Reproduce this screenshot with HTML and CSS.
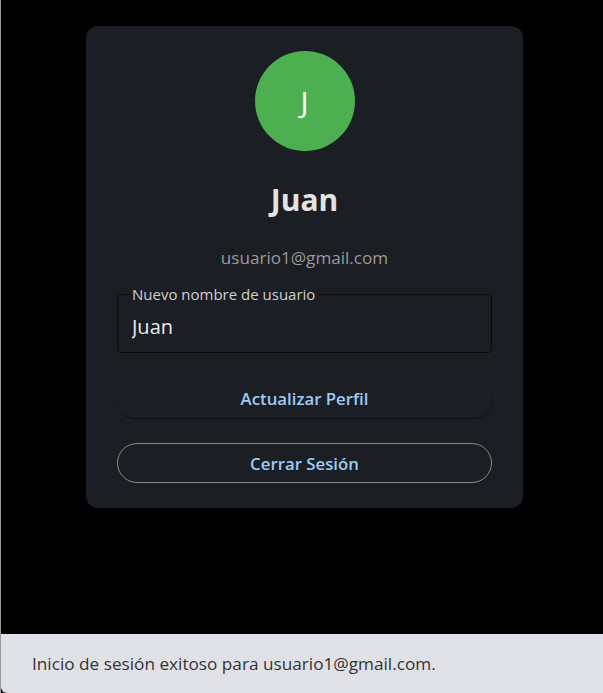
FILE: index.html
```html
<!DOCTYPE html>
<html lang="es">
<head>
<meta charset="utf-8">
<title>Perfil</title>
<link rel="stylesheet" href="styles.css">
</head>
<body>
<div class="frame">
  <main class="main">
    <section class="card">
      <div class="avatar">J</div>
      <h1 class="name">Juan</h1>
      <p class="email">usuario1@gmail.com</p>
      <fieldset class="field">
        <legend class="legend">Nuevo nombre de usuario</legend>
        <input class="input" type="text" value="Juan">
      </fieldset>
      <button class="btn btn-text">Actualizar Perfil</button>
      <button class="btn btn-outline">Cerrar Sesión</button>
    </section>
  </main>
  <div class="toast">Inicio de sesión exitoso para usuario1@gmail.com.</div>
</div>
</body>
</html>
```
FILE: styles.css
```css
html, body {
  margin: 0;
  padding: 0;
  height: 100%;
  background: #000;
  font-family: "Open Sans", "Noto Sans", sans-serif;
}
.frame {
  height: 693px;
  border-left: 1px solid #9a9a9a;
  box-sizing: border-box;
  display: flex;
  flex-direction: column;
}
.main {
  flex: 1;
  padding: 26px 0 0 85px;
}
.card {
  width: 437px;
  box-sizing: border-box;
  background: #1b1e23;
  border-radius: 12px;
  padding: 25px 31px 25px 31px;
  display: flex;
  flex-direction: column;
  align-items: center;
}
.avatar {
  width: 100px;
  height: 100px;
  border-radius: 50%;
  background: #4caf50;
  color: #fff;
  font-size: 30px;
  display: flex;
  align-items: center;
  justify-content: center;
}
.name {
  margin: 31px 0 0;
  font-size: 30px;
  line-height: 36px;
  font-weight: 700;
  color: #e3e3e3;
}
.email {
  margin: 28px 0 0;
  font-size: 17.1px;
  line-height: 24px;
  color: #9a9a9a;
}
.field {
  margin: 17px 0 0;
  width: 100%;
  box-sizing: border-box;
  border: 1px solid #0b0b0c;
  border-radius: 4px;
  padding: 0 13px 0 13px;
  height: 66px;
  min-width: 0;
}
.legend {
  padding: 0 4px 0 1px;
  margin-left: 0;
  font-size: 15px;
  line-height: 15px;
  color: #cfcfcf;
}
.input {
  display: block;
  width: 100%;
  background: transparent;
  border: none;
  outline: none;
  padding: 0;
  margin-top: 12px;
  margin-left: 1px;
  font-family: inherit;
  font-size: 20px;
  line-height: 26px;
  color: #ececec;
}
.btn {
  width: 100%;
  height: 40px;
  font-family: inherit;
  font-size: 16.8px;
  font-weight: 600;
  color: #9ecbf5;
  cursor: pointer;
  background: #1b1e23;
}
.btn-text {
  margin-top: 25px;
  border: none;
  border-radius: 18px;
  box-shadow: 0 1px 1px rgba(0,0,0,0.35);
}
.btn-outline {
  margin-top: 25px;
  height: 40px;
  border: 1px solid #8a8a8a;
  border-radius: 20px;
}
.toast {
  height: 59px;
  background: #e0e1e6;
  border-bottom-left-radius: 6px;
  padding-left: 31px;
  display: flex;
  align-items: center;
  font-size: 17.2px;
  color: #333;
}
```
